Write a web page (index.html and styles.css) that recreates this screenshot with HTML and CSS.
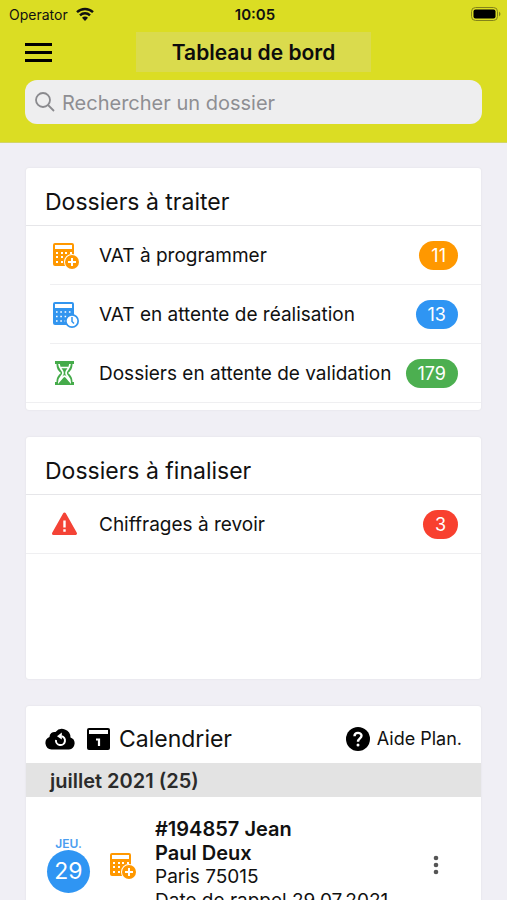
FILE: index.html
```html
<!DOCTYPE html>
<html lang="fr">
<head>
<meta charset="utf-8">
<meta name="viewport" content="width=device-width, initial-scale=1">
<title>Tableau de bord</title>
<link rel="stylesheet" href="styles.css">
</head>
<body>
<svg class="defs" aria-hidden="true">
  <symbol id="calc-plus" viewBox="0 0 27 27">
    <path fill="currentColor" fill-rule="evenodd" d="M3 1h17a2 2 0 0 1 2 2v20a1 1 0 0 1-1 1H3a2 2 0 0 1-2-2V3a2 2 0 0 1 2-2zM3 3v4h17V3zM4 10v2h2v-2zM9 10v2h2v-2zM13 10v2h2v-2zM18 10v2h2v-2zM4 14v2h2v-2zM9 14v2h2v-2zM4 19v2h2v-2zM9 19v2h2v-2z"/>
    <circle cx="20" cy="20" r="8" fill="#fff"/>
    <circle cx="20" cy="20" r="7" fill="currentColor"/>
    <path d="M20 16v8M16 20h8" stroke="#fff" stroke-width="2"/>
  </symbol>
  <symbol id="calc-clock" viewBox="0 0 27 27">
    <path fill="currentColor" fill-rule="evenodd" d="M3 1h17a2 2 0 0 1 2 2v20a1 1 0 0 1-1 1H3a2 2 0 0 1-2-2V3a2 2 0 0 1 2-2zM3 3v4h17V3z"/>
    <path stroke="#fff" stroke-width="1.600" stroke-dasharray="1.600 2.700" d="M4 11h17M4 15.500h17M4 20h10"/>
    <circle cx="20" cy="20" r="7" fill="currentColor"/>
    <circle cx="20" cy="20" r="5.300" fill="#fff"/>
    <path d="M20 16v4.500l2 2" fill="none" stroke="currentColor" stroke-width="1.500"/>
  </symbol>
</svg>
<div class="app">
  <header class="top">
    <div class="status">
      <span class="carrier">Operator
        <svg width="18" height="14" viewBox="0 0 18 14" aria-hidden="true"><g fill="none" stroke="#111" stroke-width="2.400"><path d="M1 5.200a11.500 11.500 0 0 1 16 0"/><path d="M4 8.300a7.200 7.200 0 0 1 10 0"/></g><path fill="#111" d="M9 14 6 10.800a4.200 4.200 0 0 1 6 0z"/></svg>
      </span>
      <span class="clock">10:05</span>
      <svg class="battery" width="30" height="14" viewBox="0 0 30 14" aria-hidden="true"><rect x=".5" y=".5" width="26" height="13" rx="4" fill="none" stroke="#83831a"/><rect x="2.500" y="2.500" width="22" height="9" rx="2" fill="#000"/><path d="M28 4.500q3 2.500 0 5z" fill="#83831a"/></svg>
    </div>
    <div class="nav">
      <button class="menu" type="button" aria-label="Menu"><svg width="27" height="19" viewBox="0 0 27 19"><path d="M0 1.500h27M0 9.500h27M0 17.500h27" stroke="#000" stroke-width="2.800"/></svg></button>
      <h1>Tableau de bord</h1>
    </div>
    <label class="search">
      <svg width="20" height="20" viewBox="0 0 20 20" fill="none" stroke="#8a8a8e" stroke-width="1.800" aria-hidden="true"><circle cx="8" cy="8" r="7"/><path d="m13 13 6 6"/></svg>
      <input type="search" aria-label="Rechercher un dossier" placeholder="Rechercher un dossier">
    </label>
  </header>
  <main>
    <section class="card">
      <h2>Dossiers à traiter</h2>
      <ul class="rows">
        <li><svg class="icon orange" aria-hidden="true"><use href="#calc-plus"/></svg><span class="label">VAT à programmer</span><span class="badge bg-orange">11</span></li>
        <li><svg class="icon blue" aria-hidden="true"><use href="#calc-clock"/></svg><span class="label">VAT en attente de réalisation</span><span class="badge bg-blue">13</span></li>
        <li><svg class="icon green" viewBox="0 0 27 27" aria-hidden="true"><path fill="currentColor" d="M3 1h19v3h-1.500c0 5-2 7-4.500 9 2.500 2 4.500 4 4.500 9H22v3H3v-3h1.500c0-5 2-7 4.500-9-2.500-2-4.500-4-4.500-9H3z"/><path fill="none" stroke="#fff" stroke-width="1.700" d="M7 4c.3 5 4 6 4 9s-3.700 4-4 8.500l4-4.500c1-1 2-1 3 0l4 4.500c-.3-4.500-4-5.500-4-8.500s3.700-4 4-9M8.500 7.500h8"/></svg><span class="label">Dossiers en attente de validation</span><span class="badge bg-green">179</span></li>
      </ul>
    </section>
    <section class="card">
      <h2>Dossiers à finaliser</h2>
      <ul class="rows">
        <li><svg class="icon red" viewBox="0 0 27 27" aria-hidden="true"><path fill="currentColor" stroke="currentColor" stroke-width="3" stroke-linejoin="round" d="M12.500 3 23.500 22.500h-22z"/><path stroke="#fff" stroke-width="2.400" d="M12.500 9.500v7M12.500 18.300v2.400"/></svg><span class="label">Chiffrages à revoir</span><span class="badge bg-red">3</span></li>
      </ul>
    </section>
    <section class="card calendar">
      <div class="cal-head">
        <svg width="30" height="22" viewBox="0 0 30 22" aria-hidden="true"><path d="M6.500 21.500A6.500 6.500 0 0 1 4.500 9 5 5 0 0 1 10.500 4a8.500 8.500 0 0 1 15 5.500A6.200 6.200 0 0 1 24 21.500z"/><path fill="none" stroke="#fff" stroke-width="2" d="M11 12a4.500 4.500 0 1 0 5.500-3.800"/><path fill="#fff" d="M12 8.200 16.800 4.500v7z"/></svg>
        <svg width="23" height="23" viewBox="0 0 23 23" aria-hidden="true"><rect x="0" y="1" width="23" height="22" rx="2"/><path fill="#fff" d="M2 3h19v4H2z"/><path fill="none" stroke="#fff" stroke-width="2.200" d="M9 12.500h3V19"/></svg>
        <h2>Calendrier</h2>
        <a class="help" href="#aide"><svg width="24" height="24" viewBox="0 0 24 24" aria-hidden="true"><circle cx="12" cy="12" r="12"/><path fill="none" stroke="#fff" stroke-width="2.400" d="M8.500 9.200c0-4.400 7-4.200 7-.4 0 2.700-3.500 2.500-3.500 6"/><circle cx="12" cy="18" r="1.500" fill="#fff"/></svg>Aide Plan.</a>
      </div>
      <h3>juillet 2021 (25)</h3>
      <article class="event">
        <div class="date"><span class="weekday">JEU.</span><span class="day">29</span></div>
        <svg class="icon orange" aria-hidden="true"><use href="#calc-plus"/></svg>
        <div class="details">
          <strong>#194857 Jean Paul Deux</strong>
          <span>Paris 75015</span>
          <span>Date de rappel 29.07.2021</span>
        </div>
        <button class="more" type="button" aria-label="Plus d’options"><svg width="6" height="20" viewBox="0 0 6 20" fill="#555"><circle cx="3" cy="3" r="2.300"/><circle cx="3" cy="10" r="2.300"/><circle cx="3" cy="17" r="2.300"/></svg></button>
      </article>
    </section>
  </main>
</div>
</body>
</html>
```

FILE: styles.css
```css
* { box-sizing: border-box; }
body {
  margin: 0;
  font-family: Inter, "Liberation Sans", sans-serif;
  color: #111;
  background: #f0eff5;
}
h1, h2, h3, ul { margin: 0; padding: 0; }
h2 { font-size: 23px; font-weight: 400; }
button { padding: 0; border: 0; background: none; }
svg { flex: none; display: block; }
.defs { position: absolute; width: 0; height: 0; }
.app { height: 100vh; overflow-y: auto; scrollbar-width: none; }

.top {
  height: 143px;
  padding-bottom: 19px;
  background: #dbdd23;
  border-bottom: 1px solid #d3d568;
}
.status {
  display: grid;
  grid-template-columns: 1fr auto 1fr;
  align-items: center;
  height: 28px;
  padding: 0 6px 0 9px;
  font-size: 14px;
}
.carrier { display: flex; align-items: center; gap: 8px; }
.clock { font-size: 15px; font-weight: 600; }
.battery { justify-self: end; }
.nav {
  display: grid;
  grid-template-columns: 1fr auto 1fr;
  align-items: center;
  height: 48px;
  padding: 0 25px;
}
.menu { justify-self: start; }
h1 {
  padding: 2px 36px 0;
  font-size: 21px;
  font-weight: 600;
  line-height: 38px;
  color: #0c0c0c;
  background: #dadb4d;
}
.search {
  display: flex;
  align-items: center;
  gap: 7px;
  height: 44px;
  margin: 4px 25px 0;
  padding: 0 10px;
  border-radius: 12px;
  background: #eeeeef;
}
.search input {
  flex: 1;
  min-width: 0;
  padding: 2px 0 0;
  border: 0;
  outline: 0;
  background: none;
  font: 20px Inter, "Liberation Sans", sans-serif;
}
.search input::placeholder { color: #8e8e93; opacity: 1; }

main {
  display: flex;
  flex-direction: column;
  gap: 27px;
  padding: 25px 26px;
}
.card {
  min-height: 242px;
  border-radius: 3px;
  background: #fff;
  box-shadow: 0 0 2px #dddde2;
}
.card > h2 {
  padding: 12px 19px 0;
  line-height: 45px;
  border-bottom: 1px solid #e6e6e9;
}
.rows { list-style: none; }
.rows li {
  display: flex;
  align-items: center;
  height: 59px;
  padding: 0 23px 0 26px;
  background: linear-gradient(#efeff1, #efeff1) 24px 100% / 100% 1px no-repeat;
}
.rows li:last-child { background-position: 0 100%; }
.icon { width: 27px; height: 27px; }
.orange { color: #ff9800; }
.blue { color: #3295ef; }
.green { color: #45ab4a; }
.red { color: #f44336; }
.label { flex: 1; margin-left: 20px; font-size: 19px; white-space: nowrap; }
.badge {
  padding: 0 12px;
  border-radius: 15px;
  color: #fff;
  font-size: 18px;
  line-height: 29px;
}
.bg-orange { background: #ff9800; }
.bg-blue { background: #2f95f3; }
.bg-green { background: #4caf50; }
.bg-red { background: #f8402f; }

.cal-head {
  display: flex;
  align-items: center;
  gap: 12px;
  height: 57px;
  padding: 8px 19px 0;
}
.cal-head h2 { margin-left: -3px; }
.help {
  display: flex;
  align-items: center;
  gap: 7px;
  margin-left: auto;
  font-size: 18px;
  color: inherit;
  text-decoration: none;
  white-space: nowrap;
}
h3 {
  padding: 2px 24px 0;
  font-size: 20px;
  font-weight: 600;
  line-height: 32px;
  color: #2b2b2b;
  background: #e3e3e3;
}
.event {
  display: flex;
  align-items: center;
  gap: 19px;
  padding: 20px 42px 20px 21px;
}
.date { display: flex; flex-direction: column; align-items: center; }
.weekday {
  font-size: 12px;
  font-weight: 600;
  line-height: 12px;
  color: #4a9df0;
}
.day {
  width: 43px;
  border-radius: 50%;
  font-size: 23px;
  line-height: 43px;
  text-align: center;
  color: #fff;
  background: #2f95f3;
}
.details {
  flex: 0 1 240px;
  display: flex;
  flex-direction: column;
  font-size: 19px;
  line-height: 24px;
  white-space: nowrap;
}
.details strong {
  max-width: 160px;
  font-size: 20px;
  font-weight: 600;
  white-space: normal;
}
.more { margin-left: auto; }
```
